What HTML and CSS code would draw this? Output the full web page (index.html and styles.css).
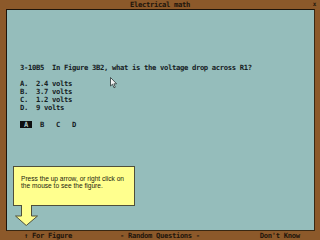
FILE: index.html
```html
<!DOCTYPE html>
<html lang="en">
<head>
	<title>Electrical math</title>
	<meta charset="utf-8">
	<meta name="viewport" content="width=device-width, initial-scale=1">
	<link rel="stylesheet" href="styles.css">
</head>

<body>
	<div class="titlebar">
		<span></span>
		<span class="title">Electrical math</span>
		<span class="close">x</span>
	</div>

	<div class="screen">
		<div class="line">3-10B5  In Figure 3B2, what is the voltage drop across R1?</div>

		<div class="answers">
			<div class="line">A.  2.4 volts</div>
			<div class="line">B.  3.7 volts</div>
			<div class="line">C.  1.2 volts</div>
			<div class="line">D.  9 volts</div>
		</div>

		<div class="choices">
			<span class="choice selected">A</span>
			<span class="choice">B</span>
			<span class="choice">C</span>
			<span class="choice">D</span>
		</div>

		<div class="hint">
			<div class="callout">Press the up arrow, or right click on<br>the mouse to see the figure.</div>
			<svg class="hint-arrow" width="23" height="21" viewBox="0 0 23 21">
				<polygon points="6,0 17,0 17,11 22.5,11 11.25,20.5 0.5,11 6,11" fill="#ffff8e"/>
				<polyline points="6.5,0 6.5,11 0.5,11 11.25,20.5 22.5,11 16.5,11 16.5,0" fill="none" stroke="#4f4f3a" stroke-width="1"/>
			</svg>
		</div>
	</div>

	<div class="status">      ↑ For Figure            - Random Questions -               Don't Know</div>

	<svg class="cursor" width="8" height="12" viewBox="0 0 8 12">
		<polygon points="0.5,0.5 0.5,9 2.5,7.2 4,10.8 5.3,10.2 3.9,6.8 6.6,6.8" fill="#f4f4f4" stroke="#2a3434" stroke-width="0.8"/>
	</svg>
</body>

</html>
```

FILE: styles.css
```css
body {
	margin: 0;
	padding: 0;
	width: 320px;
	height: 240px;
	overflow: hidden;
	position: relative;
	background: rgb(140, 89, 42);
	color: #22150a;
	font-family: "DejaVu Sans Mono", "Liberation Mono", monospace;
	font-weight: bold;
	font-size: 7.2px;
	letter-spacing: -0.33px;
}

.titlebar {
	height: 9px;
	line-height: 9px;
	display: grid;
	grid-template-columns: 1fr auto 1fr;
}

.title {
	text-align: center;
}

.close {
	justify-self: end;
	margin-right: 4px;
	font-size: 6px;
	line-height: 8px;
}

.screen {
	box-sizing: border-box;
	margin: 0 5px 0 6px;
	height: 222px;
	padding: 54px 0 0 13px;
	background: rgb(149, 189, 187);
	border: 1px solid #1e140a;
	border-right-color: #3a2812;
	border-bottom-color: #3a2812;
	color: #15201f;
	line-height: 8px;
}

.line {
	height: 8px;
	white-space: pre;
}

.answers {
	margin-top: 8px;
}

.choices {
	margin-top: 9px;
	display: flex;
	gap: 4px;
	height: 7px;
}

.choice {
	width: 12px;
	height: 7px;
	line-height: 7px;
	text-align: center;
}

.choice.selected {
	background: #0e0f0f;
	color: #a9c6c4;
}

.hint {
	margin: 38px 0 0 -7px;
}

.callout {
	box-sizing: border-box;
	width: 122px;
	height: 40px;
	padding: 7.5px 0 0 7px;
	background: #ffff8e;
	border: 1px solid #4f4f3a;
	color: #23230f;
	font-family: "Liberation Sans", Arial, sans-serif;
	font-weight: normal;
	font-size: 6.6px;
	letter-spacing: 0;
	line-height: 7.4px;
}

.hint-arrow {
	display: block;
	margin: -1px 0 0 2px;
}

.status {
	height: 9px;
	line-height: 10px;
	white-space: pre;
}

.cursor {
	position: absolute;
	left: 110px;
	top: 77px;
}
```
